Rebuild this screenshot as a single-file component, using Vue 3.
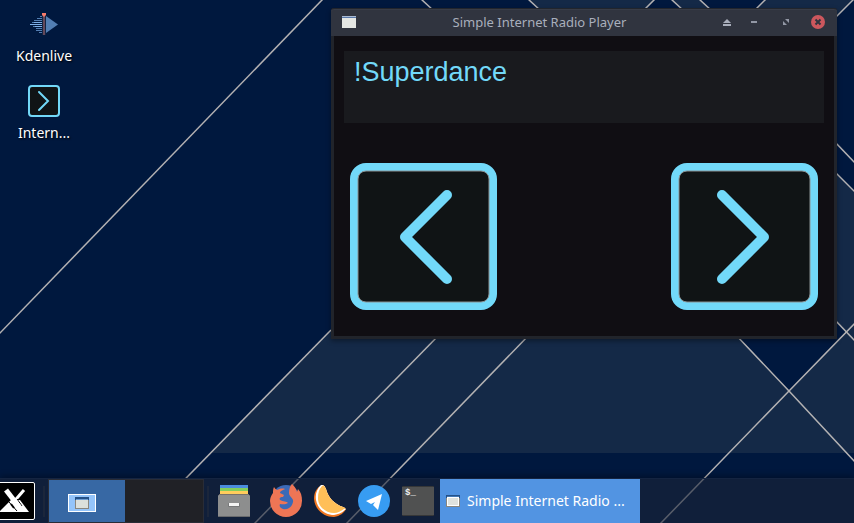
<script setup>
import { ref } from 'vue'

const station = ref('!Superdance')
const title = 'Simple Internet Radio Player'

const wallpaperLines = [
  'M-1 334L323 -1',
  'M149 516L331 330',
  'M254 524L440 334',
  'M346 524L530 334',
  'M660 524L789 391L860 318',
  'M421 -1L434 11',
  'M528 -1L541 11',
  'M655 -1L643 11',
  'M671 -1L684 11',
  'M699 -1L712 11',
  'M766 -1L754 11',
  'M854 -1L834 19',
  'M834 141L856 164',
  'M834 171L856 193',
  'M834 319L856 342',
  'M735 334L789 391L856 463'
]
</script>

<template>
  <div class="desktop">
    <svg class="wallpaper" viewBox="0 0 854 523" preserveAspectRatio="xMinYMin slice" aria-hidden="true">
      <rect width="854" height="523" fill="#00183e" />
      <g fill="#142947">
        <path d="M331 330L212 453H854V330Z" />
        <path d="M529 0H654L640 14H543Z" />
        <path d="M672 0H700L714 14H686Z" />
        <path d="M765 0H853L839 14H751Z" />
        <path d="M834 171L854 191V340H834Z" />
      </g>
      <path d="M735 334L789 391L846 332L834 319V334Z" fill="#00183e" />
      <g class="lines">
        <path v-for="d in wallpaperLines" :key="d" :d="d" />
      </g>
    </svg>

    <nav class="shortcuts" aria-label="Desktop">
      <a class="shortcut" href="#kdenlive">
        <svg width="32" height="32" viewBox="0 0 32 32" aria-hidden="true">
          <g stroke="#7cafe9" stroke-width="1">
            <path d="M12 8.500h2M9 10.500h5M6 12.500h8M4 14.500h10M2 16.500h12M5 18.500h9M8 20.500h6M8 22.500h6M11 24.500h3" stroke="#527eb3" />
            <path d="M6 14.500h8M2 16.500h12M7 18.500h7" />
          </g>
          <path d="M18 8v17l12-8.500z" fill="#527eb3" />
          <path d="M14.500 6h3v21h-3z" fill="#24334d" />
          <path d="M16 6v21" stroke="#a36068" />
          <path d="M14 5h4v2l-2 2l-2-2z" fill="#f47b6b" />
        </svg>
        <span>Kdenlive</span>
      </a>
      <a class="shortcut" href="#radio">
        <svg width="32" height="32" viewBox="0 0 32 32" aria-hidden="true">
          <rect x="1" y="1" width="30" height="30" rx="3" fill="#101416" stroke="#72d8f8" stroke-width="2" />
          <path d="M11 7l9 9l-9 9" fill="none" stroke="#72d8f8" stroke-width="2" stroke-linecap="round" />
        </svg>
        <span>Intern...</span>
      </a>
    </nav>

    <main class="window">
      <header class="titlebar">
        <svg width="14" height="12" viewBox="0 0 14 12" aria-hidden="true">
          <rect width="14" height="12" fill="#e4e6e3" />
          <rect width="14" height="2" fill="#5878aa" />
          <rect width="14" height="1" fill="#a9bad2" />
        </svg>
        <h1>{{ title }}</h1>
        <div class="controls">
          <button type="button" aria-label="Shade">
            <svg width="14" height="14" viewBox="0 0 14 14"><path d="M5 8l4-4l4 4zM5 9h8v2H5z" fill="#a9aebb" /></svg>
          </button>
          <button type="button" aria-label="Minimize">
            <svg width="14" height="14" viewBox="0 0 14 14"><path d="M2 6h6v2H2z" fill="#9297a5" /></svg>
          </button>
          <button type="button" aria-label="Maximize">
            <svg width="14" height="14" viewBox="0 0 14 14"><path d="M5 4h4v4zM3 6l4 4H3z" fill="#9297a5" /></svg>
          </button>
          <button type="button" aria-label="Close">
            <svg width="14" height="14" viewBox="0 0 14 14">
              <circle cx="7" cy="7" r="7" fill="#cc575d" />
              <path d="M4.500 4.500l5 5M9.500 4.500l-5 5" stroke="#2f343f" stroke-width="2" />
            </svg>
          </button>
        </div>
      </header>
      <section class="player">
        <output class="station">{{ station }}</output>
        <div class="transport">
          <button type="button" aria-label="Previous station">
            <svg width="147" height="147" viewBox="0 0 147 147">
              <rect x="4" y="4" width="139" height="139" rx="12" fill="#101415" stroke="#72d9f9" stroke-width="8" />
              <rect x="8" y="8" width="131" height="131" rx="8" fill="none" stroke="#8a9294" />
              <path d="M97 32L55 74L97 116" />
            </svg>
          </button>
          <button type="button" aria-label="Next station">
            <svg width="147" height="147" viewBox="0 0 147 147">
              <rect x="4" y="4" width="139" height="139" rx="12" fill="#101415" stroke="#72d9f9" stroke-width="8" />
              <rect x="8" y="8" width="131" height="131" rx="8" fill="none" stroke="#8a9294" />
              <path d="M51 32L93 74L51 116" />
            </svg>
          </button>
        </div>
      </section>
    </main>

    <footer class="taskbar">
      <button class="menu" type="button" aria-label="Applications">
        <svg width="35" height="38" viewBox="0 0 35 38" aria-hidden="true">
          <path d="M-4 .500H33Q34.500 .500 34.500 2V36Q34.500 37.500 33 37.500H-4Z" fill="#000" stroke="#fff" />
          <path d="M0 30V29L11 18H20L29 30Z" fill="#fff" />
          <path d="M24 8L11 23" stroke="#fff" stroke-width="3" />
          <path d="M9 20L17 29M17 17L22 24" stroke="#000" stroke-width="1" />
          <path d="M6 8L20 26" stroke="#fff" stroke-width="5" />
          <path d="M11 22L14 26" stroke="#000" stroke-width="2" />
        </svg>
      </button>
      <span class="divider"></span>
      <div class="pager">
        <button class="active" type="button" aria-label="Workspace 1">
          <svg width="28" height="18" viewBox="0 0 28 18" aria-hidden="true">
            <rect x=".500" y=".500" width="27" height="17" fill="#94c4fa" stroke="#fff" />
            <rect x="7" y="3" width="14" height="12" fill="#89867f" />
            <rect x="7" y="3" width="14" height="3" fill="#245188" />
            <rect x="8" y="5" width="12" height="9" fill="#dce0dc" />
            <rect x="8" y="5" width="12" height="1" fill="#6e9dd2" />
          </svg>
        </button>
        <button type="button" aria-label="Workspace 2"></button>
      </div>
      <span class="divider"></span>
      <nav class="launchers" aria-label="Launchers">
        <a href="#files" aria-label="Files">
          <svg width="32" height="32" viewBox="0 0 32 32">
            <path d="M2 0h28v4H2z" fill="#4b8cdd" />
            <path d="M2 3h28v4H2z" fill="#83ce5b" />
            <path d="M2 6h28v4H2z" fill="#ffcc5c" />
            <path d="M1 9h30v1H1z" fill="#77716a" />
            <rect y="10" width="32" height="22" rx="1" fill="#8d8e8e" />
            <path d="M0 31h32v1H0z" fill="#686a6d" />
            <rect x="10" y="18" width="12" height="4" rx="1" fill="#777879" />
            <rect x="11" y="18" width="10" height="3" fill="#f4f4f4" />
          </svg>
        </a>
        <a href="#firefox" aria-label="Firefox">
          <svg width="32" height="34" viewBox="0 0 32 34">
            <circle cx="16" cy="15" r="14" fill="#3b6ab8" />
            <path d="M4 3C3 5 3 7 3 9C1 12 0 14 0 17A16 16 0 0 0 32 17C32 12 31 8 28 5L27 8C26 4 24 2 22 0C20 2 19 5 19 9C19 13 24 14 23 18C22 23 18 26 13 25C10 24 9 22 10 20C12 20 15 21 18 19C17 17 13 18 10 16C9 14 10 13 13 13L14 11L10 9C10 7 13 6 15 5C12 4 9 5 7 6Q5 5 4 3Z" fill="#ee7555" />
          </svg>
        </a>
        <a href="#clementine" aria-label="Clementine">
          <svg width="32" height="32" viewBox="0 0 32 32">
            <path d="M8 0C2 3 0 8 0 14C1 25 10 32 20 32C26 31 30 28 32 24L29 22C20 19 14 12 12 4Q10 -1 8 0Z" fill="#f27821" />
            <path d="M7 0C3 4 1 9 2 15C4 25 12 30 20 30C26 29 29 27 32 24L29 22C20 19 14 12 12 4Q10 -1 7 0Z" fill="#fff" />
            <path d="M8 1Q10 -1 12 4C14 12 20 19 29 22Q33 23 30 24C27 26 24 28 20 28C12 28 4 22 4 13C4 8 5 4 8 1Z" fill="#ffbf58" />
          </svg>
        </a>
        <a href="#telegram" aria-label="Telegram">
          <svg width="32" height="32" viewBox="0 0 32 32">
            <circle cx="16" cy="16" r="16" fill="#379cf2" />
            <path d="M8 16L24 9L20 25L15 20L17 17L13 19Z" fill="#fff" />
          </svg>
        </a>
        <a href="#terminal" aria-label="Terminal">
          <svg width="32" height="32" viewBox="0 0 32 32">
            <rect y="1" width="32" height="30" rx="1" fill="#363738" />
            <rect y="2" width="32" height="28" fill="#505151" />
            <text x="3" y="10" class="prompt">$_</text>
          </svg>
        </a>
      </nav>
      <button class="task" type="button">
        <svg width="14" height="12" viewBox="0 0 14 12" aria-hidden="true">
          <rect width="14" height="12" fill="#89867f" />
          <rect width="14" height="3" fill="#245188" />
          <rect x="1" y="2" width="12" height="9" fill="#fff" />
          <rect x="2" y="3" width="10" height="7" fill="#dfe2de" />
          <rect x="1" y="1" width="12" height="1" fill="#4277b4" />
        </svg>
        <span>Simple Internet Radio ...</span>
      </button>
    </footer>
  </div>
</template>

<style>
body {
  margin: 0;
  background: #00183e;
}
</style>

<style scoped>
.desktop {
  position: relative;
  display: flex;
  flex-direction: column;
  justify-content: space-between;
  min-height: 100vh;
  overflow: hidden;
  font-family: "Noto Sans", sans-serif;
  font-size: 14px;
}
button {
  margin: 0;
  padding: 0;
  border: 0;
  background: none;
  font: inherit;
  color: inherit;
  cursor: pointer;
}
svg {
  display: block;
  flex: none;
}
.wallpaper {
  position: absolute;
  inset: 0;
  width: 100%;
  height: 100%;
}
.lines {
  fill: none;
  stroke: #b4b2b3;
  stroke-width: 1.5px;
}
.shortcuts {
  position: relative;
  display: flex;
  flex-direction: column;
  align-items: flex-start;
  gap: 19px;
  padding: 8px 4px;
}
.shortcut {
  display: flex;
  flex-direction: column;
  align-items: center;
  gap: 6px;
  width: 80px;
  color: #fff;
  line-height: 20px;
  text-decoration: none;
  text-shadow: 1px 1px 2px #000;
}
.window {
  position: absolute;
  top: 8px;
  left: 331px;
  box-sizing: border-box;
  width: 506px;
  border: 3px solid #21242b;
  border-top: 0;
  border-radius: 3px 3px 0 0;
  background: #100e13;
  box-shadow: 0 2px 5px #00000060;
}
.titlebar {
  display: grid;
  grid-template-columns: 32px 1fr 120px;
  align-items: center;
  height: 28px;
  box-sizing: border-box;
  margin: 0 -3px;
  padding: 0 12px 1px 11px;
  border-top: 1px solid #22252c;
  border-radius: 3px 3px 0 0;
  background: #30343f;
  box-shadow: inset 0 1px #383c47;
}
.titlebar h1 {
  margin: 0;
  color: #a9afbc;
  font-size: 13px;
  font-weight: 400;
  line-height: 18px;
  text-align: center;
  white-space: nowrap;
}
.controls {
  display: flex;
  justify-content: flex-end;
  gap: 17px;
}
.player {
  padding: 15px 10px 26px;
}
.station {
  display: block;
  box-sizing: border-box;
  height: 72px;
  padding: 6px 10px;
  background: #191a1e;
  color: #72d9f9;
  font: 27px/30px "Liberation Sans", sans-serif;
}
.transport {
  display: flex;
  justify-content: space-between;
  padding: 40px 6px 0;
}
.transport path {
  fill: none;
  stroke: #72d9f9;
  stroke-width: 10px;
  stroke-linecap: round;
  stroke-linejoin: round;
}
.taskbar {
  position: relative;
  display: flex;
  align-items: center;
  height: 44px;
  border-top: 1px solid #142441;
  background: #1b243999;
  box-shadow: 0 -2px 6px #00000050;
}
.divider {
  width: 2px;
  height: 31px;
  margin: 0 3px 0 8px;
  background: #1b263b;
}
.pager {
  display: grid;
  grid-template-columns: 76px 78px;
  align-self: stretch;
  border: 1px solid #292c36;
  background: #202126;
}
.pager button {
  display: flex;
  align-items: center;
  justify-content: center;
}
.pager .active {
  padding: 4px 10px 0 0;
  background: #3768a4;
}
.pager + .divider {
  margin: 0 9px 0 3px;
}
.launchers {
  display: flex;
  align-items: center;
  gap: 12px;
}
.launchers a:first-child {
  margin-right: 8px;
}
.prompt {
  fill: #eee;
  font: bold 9px "Liberation Mono", monospace;
}
.task {
  display: flex;
  align-items: center;
  align-self: stretch;
  gap: 7px;
  width: 200px;
  margin-left: 6px;
  padding: 0 6px 1px;
  background: #5294e2;
  color: #fff;
  white-space: nowrap;
}
</style>
